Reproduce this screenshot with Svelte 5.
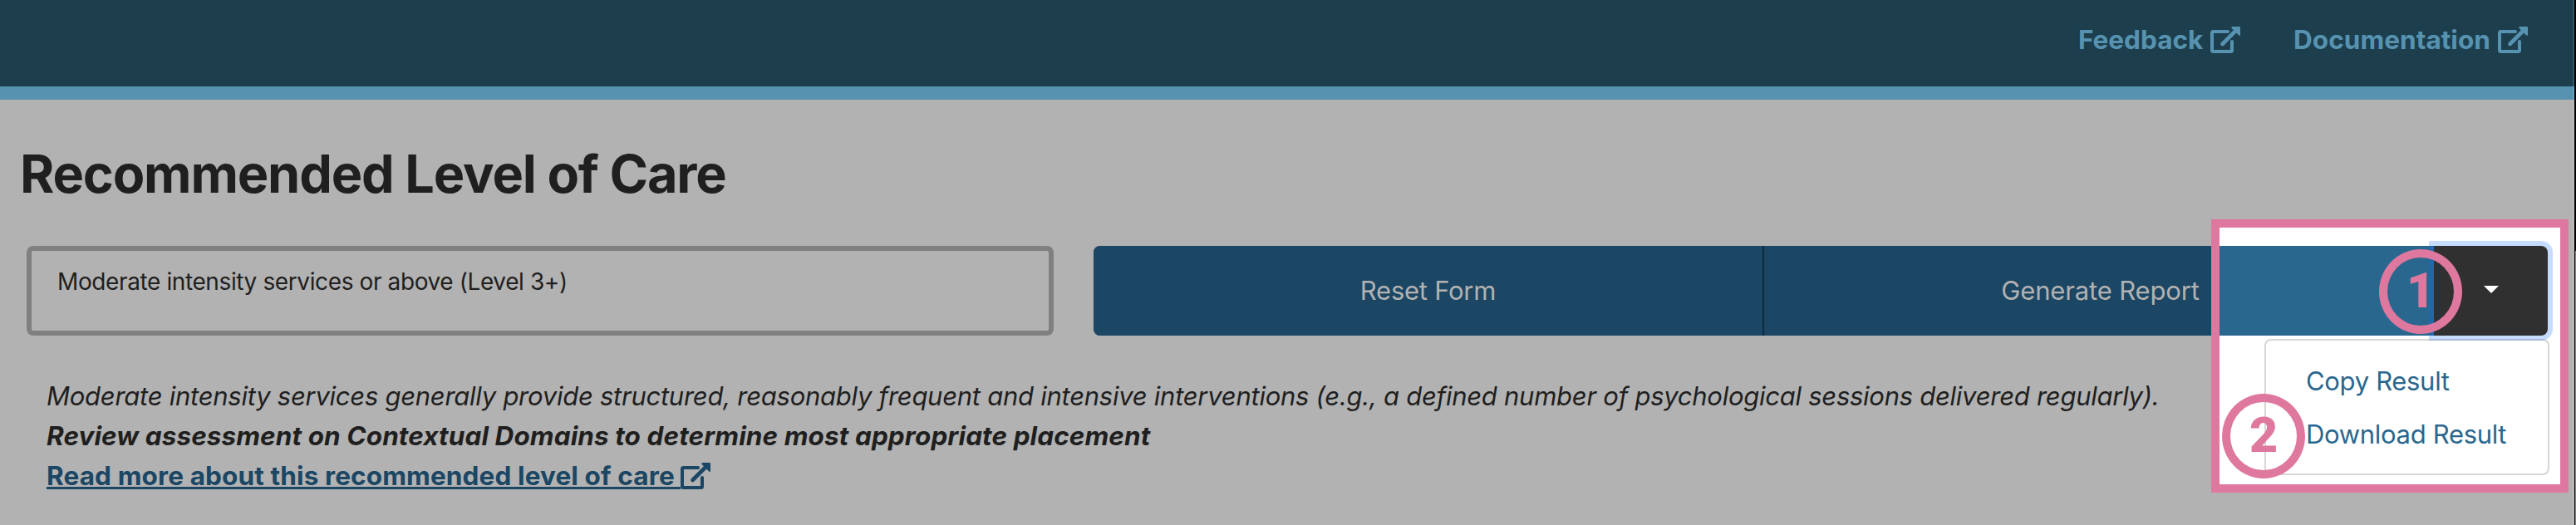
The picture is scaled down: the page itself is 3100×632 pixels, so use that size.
<script>
  const nav = [
    { label: 'Feedback', cls: 'feedback' },
    { label: 'Documentation', cls: 'documentation' }
  ];
  const actions = ['Copy Result', 'Download Result'];
</script>

{#snippet external()}
  <svg class="ext" viewBox="0 0 36 32" width="36" height="32" fill="none" stroke="currentColor" stroke-width="4">
    <path d="M21 6H3.5Q2 6 2 7.500V28.500Q2 30 3.500 30H24.500Q26 30 26 28.500V18" stroke-linecap="round" />
    <path d="M14.500 21L31 4.500" stroke-width="4.600" stroke-linecap="round" />
    <path d="M26 0H35Q36 0 36 1V10.200Q35.400 11.400 34.200 10.500L25.600 1.900Q25 .6 26 0Z" fill="currentColor" stroke="none" />
  </svg>
{/snippet}

<div class="page">
  <header>
    <nav>
      {#each nav as item}
        <a class={item.cls} href="#top"><span>{item.label}</span>{@render external()}</a>
      {/each}
    </nav>
  </header>

  <main>
    <h1>Recommended Level of Care</h1>
    <div class="row">
      <div class="result"><span>Moderate intensity services or above (Level 3+)</span></div>
      <div class="group">
        <button class="reset"><span>Reset Form</span></button>
        <button class="report"><span>Generate Report</span></button>
        <div class="drop">
          <button class="toggle" aria-label="More actions"></button>
        </div>
      </div>
    </div>
    <section>
      <p class="desc"><span>Moderate intensity services generally provide structured, reasonably frequent and intensive interventions (e.g., a defined number of psychological sessions delivered regularly).</span></p>
      <p class="review"><span>Review assessment on Contextual Domains to determine most appropriate placement</span></p>
      <p class="more"><a href="#more"><span>Read more about this recommended level of care</span>{@render external()}</a></p>
    </section>
  </main>

  <div class="spot">
    <div class="bright"></div>
    <div class="dark"><i></i></div>
    <ul class="menu">
      {#each actions as action}
        <li><span>{action}</span></li>
      {/each}
    </ul>
  </div>
  <div class="badge one"><b>1</b></div>
  <div class="badge two"><b>2</b></div>
  <div class="edge"></div>
</div>

<style>
  :global(body) { background: #b2b2b2; }
  * { box-sizing: border-box; }
  .page {
    position: relative; width: 3100px; height: 632px; overflow: hidden;
    background: #b2b2b2; color: #1f1f1f;
    font: 400 31px/48px Inter, "Liberation Sans", sans-serif;
    white-space: nowrap;
  }
  a { color: inherit; text-decoration: none; }
  .ext { display: block; flex: none; }
  header { height: 120px; background: #1c3e4d; border-bottom: 16px solid #5793b1; color: #5793b1; }
  nav { display: flex; justify-content: flex-end; gap: 64px; padding: 24px 58px 0 0; font-size: 31.5px; font-weight: 700; }
  nav a { display: flex; height: 48px; align-items: center; justify-content: space-between; }
  .feedback { width: 195px; }
  .documentation { width: 282px; letter-spacing: .05px; }

  h1 { margin: 0; padding: 51px 0 0 24px; height: 176px; font-size: 63px; line-height: 76px; font-weight: 700; letter-spacing: -1.18px; }
  .row { display: flex; gap: 48px; padding-left: 32px; height: 108px; }
  .result { width: 1236px; border: 6px solid #808080; border-radius: 8px; padding: 16px 0 0 31px; font-size: 28px; line-height: 42px; letter-spacing: -.39px; }
  .group { display: flex; width: 1750px; border-radius: 8px; overflow: hidden; background: #1b4664; }
  button { border: 0; padding: 0; background: #1b4664; color: #b2b2b2; font: inherit; }
  .reset { width: 807px; border-right: 2px solid #0d2b3d; letter-spacing: -.25px; }
  .report { width: 806px; padding-left: 3px; letter-spacing: -.15px; }
  .drop { flex: 1; }
  section { padding: 49px 0 0 56px; }
  p { margin: 0; height: 48px; }
  .desc, .review { font-style: italic; }
  .desc { letter-spacing: -.26px; }
  .review { font-size: 31.5px; font-weight: 700; letter-spacing: .09px; }
  .more { color: #1b4664; font-size: 31.5px; font-weight: 700; letter-spacing: .13px; }
  .more a { display: flex; align-items: center; width: 799px; justify-content: space-between; }
  .more a span { width: 763px; background: linear-gradient(currentColor, currentColor) 0 37px / 100% 3px no-repeat; }

  .spot { position: absolute; left: 2661px; top: 264px; width: 430px; height: 329px; border: 10px solid #df789e; background: #fff; }
  .bright { position: absolute; left: 0; top: 22px; width: 258px; height: 108px; background: #2a678e; }
  .dark {
    position: absolute; left: 258px; top: 22px; width: 137px; height: 108px;
    display: flex; justify-content: center; padding-top: 48px;
    background: #303030; border-radius: 0 8px 8px 0; box-shadow: 0 0 0 6px rgba(13, 110, 253, .24);
  }
  .dark i { width: 0; height: 0; border: 9.500px solid transparent; border-top-color: #fff; border-bottom: 0; }
  .menu {
    position: absolute; left: 54px; top: 134px; width: 343px; height: 164px; margin: 0; padding: 33px 0 0 48px;
    list-style: none; background: #fff; background-clip: padding-box;
    border: 2px solid rgba(0, 0, 0, .16); border-radius: 8px; color: #2a678e; letter-spacing: -.32px;
  }
  .menu li { height: 64px; line-height: 32px; }
  .badge {
    position: absolute; width: 100px; height: 102px; border: 10px solid #df789e; border-radius: 50%;
    display: flex; justify-content: center; align-items: center; padding-bottom: 2px; color: #df789e;
    font: 700 59px/60px Roboto, "Liberation Sans", sans-serif;
  }
  .one { left: 2863px; top: 300px; }
  .two { left: 2674px; top: 474px; }
  .edge {
    position: absolute; right: 0; top: 0; width: 4px; height: 632px;
    border-left: 2px solid rgba(255, 255, 255, .12);
    background: linear-gradient(#000 302px, #8a8a8a 302px) 1px 0 / 1px 100% no-repeat, linear-gradient(#000, #000) padding-box;
  }
</style>
